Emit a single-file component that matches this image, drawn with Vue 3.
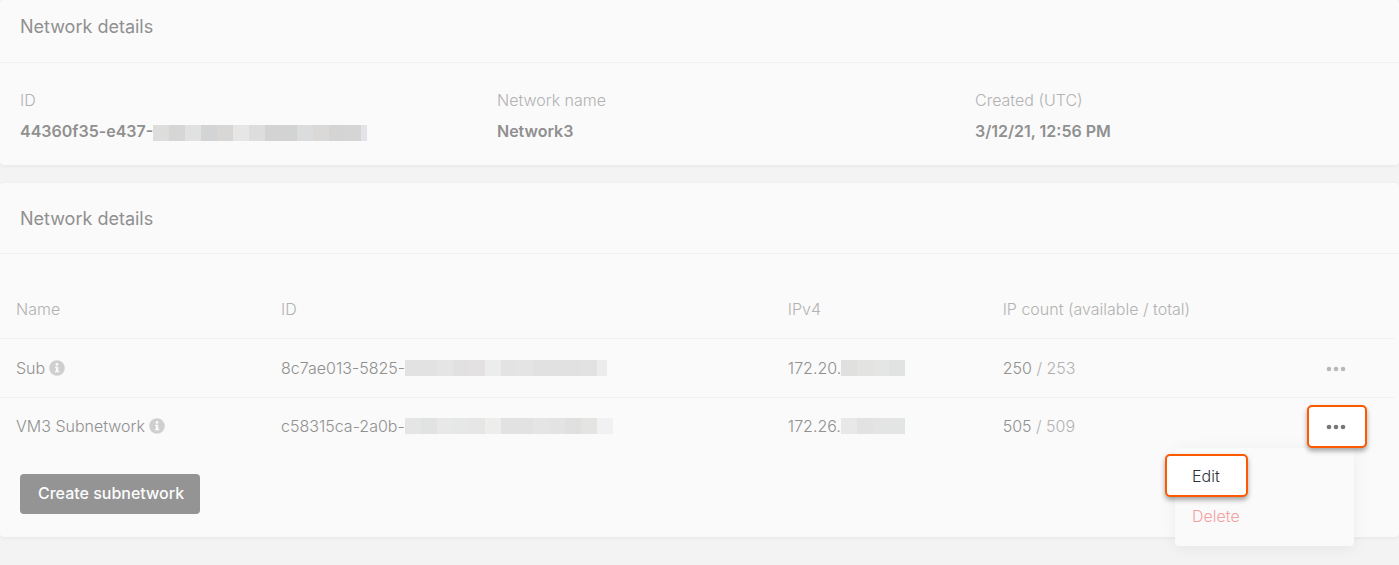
<script setup>
const details = [
  {
    label: 'ID',
    value: '44360f35-e437-',
    mask: ['#dddddb', '#d6d6d6', '#e1e1e1', '#d3d4d6', '#d9d7d5', '#e6e6e6', '#dddddd', '#d3d3d3', '#d3d3d3', '#dadcdd', '#dad9d7', '#d4d4d4', '#d5d5d5', '#e3e4e9'],
    maskWidth: 214,
  },
  { label: 'Network name', value: 'Network3' },
  { label: 'Created (UTC)', value: '3/12/21, 12:56 PM' },
]

const subnets = [
  {
    name: 'Sub',
    id: '8c7ae013-5825-',
    idMask: ['#e2e2e2', '#e3e2e2', '#e5e5e5', '#e1e1e1', '#e3e1e1', '#ebecec', '#e3e3e3', '#e3e4e3', '#e1e1e1', '#e1e1e1', '#e1e1e1', '#e2e2e2', '#ececec'],
    idMaskWidth: 202,
    ip: '172.20.',
    ipMask: ['#e0e0e0', '#e3e3e1', '#e5e5e5', '#e1e3e2'],
    available: 250,
    total: 253,
    open: false,
  },
  {
    name: 'VM3 Subnetwork',
    id: 'c58315ca-2a0b-',
    idMask: ['#e5e5e5', '#e1e3e2', '#e8e8e8', '#e6e8e7', '#e5e6e5', '#ededec', '#e2e2e2', '#e2e2e2', '#e5e5e5', '#e3e3e3', '#e0e0e0', '#e4e4e2', '#f1f1f3'],
    idMaskWidth: 208,
    ip: '172.26.',
    ipMask: ['#e8e8e8', '#e2e2e2', '#e3e4e3', '#e3e5e4'],
    available: 505,
    total: 509,
    open: true,
  },
]
</script>

<template>
  <main class="page">
    <section class="card">
      <header class="card-head first"><h2>Network details</h2></header>
      <dl class="details">
        <div v-for="d in details" :key="d.label">
          <dt>{{ d.label }}</dt>
          <dd>
            <span>{{ d.value }}</span>
            <span v-if="d.mask" class="mask low" :style="{ width: d.maskWidth + 'px' }">
              <i v-for="(c, n) in d.mask" :key="n" :style="{ background: c }"></i>
            </span>
          </dd>
        </div>
      </dl>
    </section>

    <section class="card">
      <header class="card-head"><h2>Network details</h2></header>
      <div class="table-wrap">
        <table>
          <colgroup>
            <col class="c-name" /><col class="c-id" /><col class="c-ip" /><col class="c-count" /><col />
          </colgroup>
          <thead>
            <tr>
              <th>Name</th>
              <th>ID</th>
              <th>IPv4</th>
              <th>IP count (available / total)</th>
              <td></td>
            </tr>
          </thead>
          <tbody>
            <tr v-for="s in subnets" :key="s.name">
              <td>
                <div class="line">
                  <span>{{ s.name }}</span>
                  <svg class="info" viewBox="0 0 16 16" aria-hidden="true">
                    <circle cx="8" cy="8" r="7.8" fill="#cfcfcf" />
                    <circle cx="8" cy="4.4" r="1.4" fill="#fafafa" />
                    <path d="M6 6.7h3.2v4h1v1.6H6v-1.6h1V8.3H6z" fill="#fafafa" />
                  </svg>
                </div>
              </td>
              <td>
                <div class="line">
                  <span>{{ s.id }}</span>
                  <span class="mask" :style="{ width: s.idMaskWidth + 'px' }">
                    <i v-for="(c, n) in s.idMask" :key="n" :style="{ background: c }"></i>
                  </span>
                </div>
              </td>
              <td>
                <div class="line">
                  <span>{{ s.ip }}</span>
                  <span class="mask short">
                    <i v-for="(c, n) in s.ipMask" :key="n" :style="{ background: c }"></i>
                  </span>
                </div>
              </td>
              <td>{{ s.available }} <span class="total">/ {{ s.total }}</span></td>
              <td class="actions">
                <div class="anchor">
                  <button type="button" class="more" :class="{ active: s.open }" :aria-label="'Actions for ' + s.name">
                    <svg viewBox="0 0 20 6" aria-hidden="true">
                      <circle cx="3" cy="3" r="2.3" /><circle cx="10" cy="3" r="2.3" /><circle cx="17" cy="3" r="2.3" />
                    </svg>
                  </button>
                  <div v-if="s.open" class="menu">
                    <button type="button" class="item edit">Edit</button>
                    <button type="button" class="item delete">Delete</button>
                  </div>
                </div>
              </td>
            </tr>
          </tbody>
        </table>
      </div>
      <footer class="card-foot">
        <button type="button" class="create">Create subnetwork</button>
      </footer>
    </section>
  </main>
</template>

<style>
body {
  background: #f3f3f3;
}
</style>

<style scoped>
.page {
  display: flex;
  flex-direction: column;
  gap: 18px;
  padding-bottom: 28px;
  font-family: Inter, "Liberation Sans", sans-serif;
  font-size: 16px;
  font-weight: 300;
  line-height: 24px;
  color: #909090;
}
.card {
  background: #fafafa;
  border-radius: 4px;
  box-shadow: 0 1px 4px rgba(0, 0, 0, 0.06);
}
.card-head {
  padding: 24px 20px 22px;
  border-bottom: 1px solid #f2f2f2;
}
.card-head.first {
  padding-top: 15px;
  padding-bottom: 23px;
}
h2 {
  margin: 0;
  font-size: 18px;
  font-weight: 400;
  line-height: 24px;
}
.details {
  display: grid;
  grid-template-columns: 477fr 478fr 404fr;
  margin: 0;
  padding: 22px 20px;
}
.details > div {
  padding: 3px 0 0;
}
dt {
  color: #b2b2b2;
}
dd {
  display: flex;
  margin: 7px 0 0;
  font-weight: 600;
}
.mask {
  display: flex;
  flex: none;
  align-self: center;
  height: 16px;
}
.mask.low {
  align-self: flex-end;
  height: 18px;
  box-sizing: border-box;
  padding-bottom: 2px;
}
.mask.short {
  width: 64px;
}
.mask i {
  flex: 0 1 16px;
}
.mask i:last-child {
  flex: 1 1 0;
}
.mask.short i:last-child {
  flex: 0 1 16px;
}
.table-wrap {
  padding: 26px 4px 0 0;
}
table {
  width: 100%;
  table-layout: fixed;
  border-collapse: separate;
  border-spacing: 0;
}
.c-name {
  width: 19%;
}
.c-id {
  width: 36.33%;
}
.c-ip {
  width: 15.4%;
}
.c-count {
  width: 20%;
}
th,
td {
  height: 58px;
  padding: 0 0 0 16px;
  text-align: left;
  font-weight: 300;
  border-bottom: 1px solid #f2f2f2;
  white-space: nowrap;
}
th {
  color: #b2b2b2;
}
tbody tr:last-child td {
  height: 56px;
  border-bottom: 0;
}
.line {
  display: flex;
  align-items: center;
}
.info {
  width: 16px;
  height: 16px;
  margin-left: 4px;
}
.total {
  color: #b2b2b2;
}
td.actions {
  padding: 0 28px 0 0;
}
.anchor {
  position: relative;
  width: 60px;
  margin-left: auto;
}
button {
  font: inherit;
  cursor: pointer;
}
.more {
  display: flex;
  align-items: center;
  justify-content: center;
  width: 60px;
  height: 43px;
  padding: 2px 2px 0 0;
  border: 2px solid transparent;
  border-radius: 5px;
  background: transparent;
  color: #b8b8b8;
}
.more svg {
  width: 20px;
  height: 6px;
  fill: currentColor;
}
.more.active,
.edit {
  position: relative;
  z-index: 2;
  background: #ffffff;
  border: 2px solid #fd5900;
  box-shadow: 0 3px 5px rgba(0, 0, 0, 0.35);
}
.more.active {
  color: #777777;
}
.menu {
  position: absolute;
  z-index: 1;
  top: 43px;
  right: 13px;
  width: 179px;
  box-sizing: border-box;
  padding: 6px 0 11px;
  border-radius: 4px;
  background: #fafafa;
  box-shadow: 0 2px 16px rgba(0, 0, 0, 0.06);
}
.item {
  display: block;
  text-align: left;
}
.edit {
  width: 83px;
  height: 43px;
  margin-left: -10px;
  padding: 2px 0 0 25px;
  border-radius: 5px;
  color: #303238;
}
.delete {
  width: 100%;
  height: 38px;
  padding: 0 17px;
  border: 0;
  background: transparent;
  color: #f5a0a0;
}
.card-foot {
  padding: 20px 20px 23px;
}
.create {
  height: 40px;
  padding: 0 16px 2px 18px;
  border: 0;
  border-radius: 4px;
  background: #949494;
  color: #fdfdfd;
  font-weight: 500;
}
</style>
